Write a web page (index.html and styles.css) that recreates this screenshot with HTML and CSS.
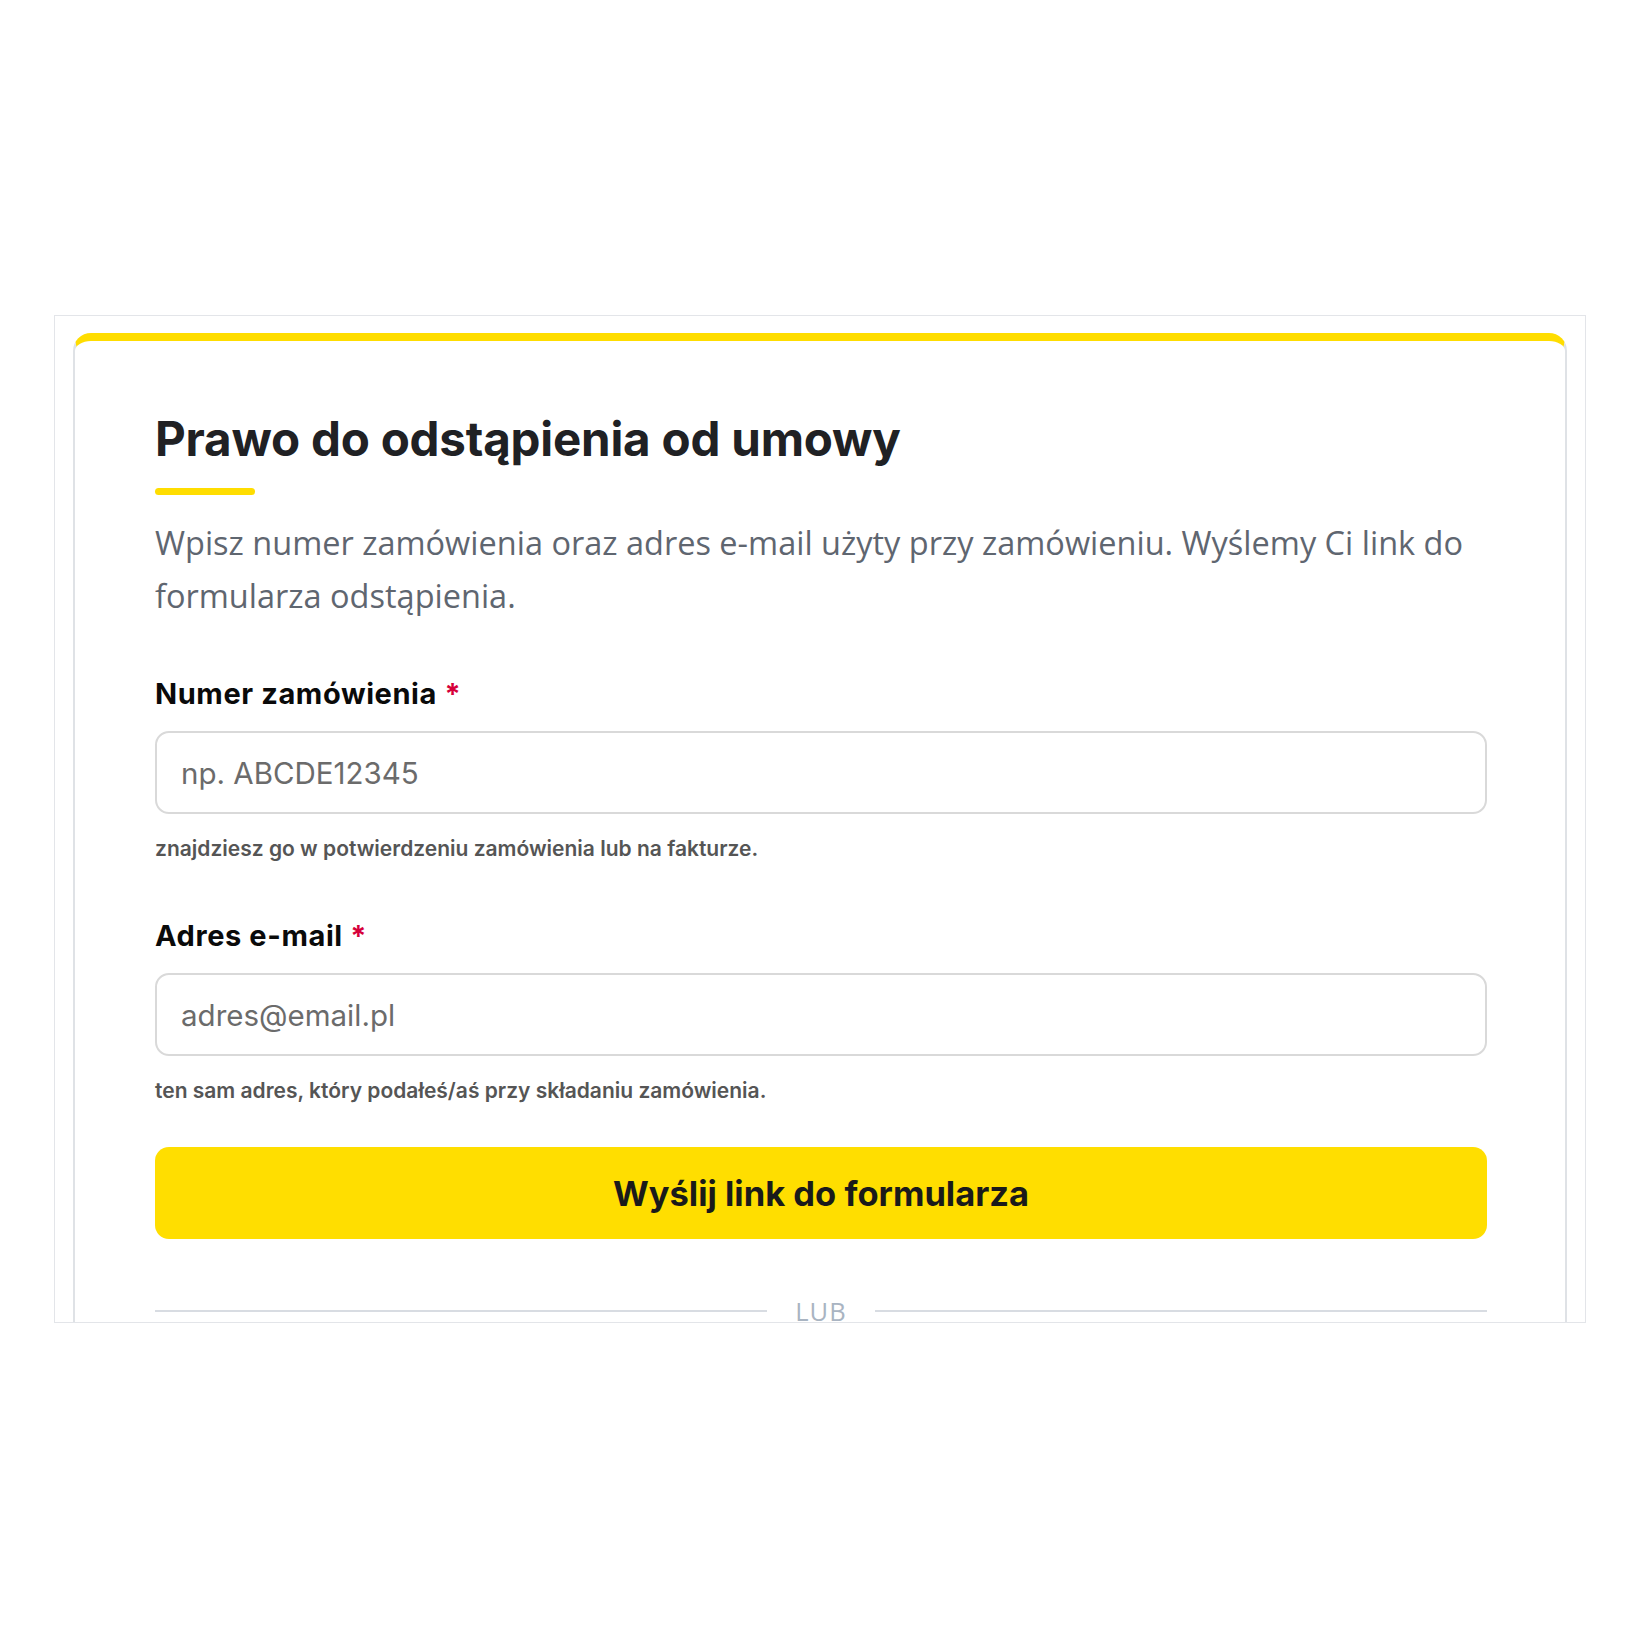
FILE: index.html
```html
<!DOCTYPE html>
<html lang="pl">
<head>
    <meta charset="UTF-8">
    <meta name="viewport" content="width=device-width, initial-scale=1.0">
    <title>Prawo do odstąpienia od umowy</title>
    <link rel="stylesheet" href="styles.css">
</head>
<body>
    <div class="frame">
        <section class="withdraw">
            <h1 class="withdraw__title">Prawo do odstąpienia od umowy</h1>
            <span class="withdraw__line"></span>
            <p class="withdraw__text">Wpisz numer zamówienia oraz adres e-mail użyty przy zamówieniu. Wyślemy Ci link do formularza odstąpienia.</p>

            <form class="form" onsubmit="return false">
                <div class="form__field">
                    <label class="form__label" for="order">Numer zamówienia <span class="form__req">*</span></label>
                    <input class="form__input" id="order" type="text" placeholder="np. ABCDE12345">
                    <p class="form__hint">znajdziesz go w potwierdzeniu zamówienia lub na fakturze.</p>
                </div>
                <div class="form__field">
                    <label class="form__label" for="email">Adres e-mail <span class="form__req">*</span></label>
                    <input class="form__input" id="email" type="email" placeholder="adres@email.pl">
                    <p class="form__hint">ten sam adres, który podałeś/aś przy składaniu zamówienia.</p>
                </div>
                <button class="form__button" type="submit">Wyślij link do formularza</button>
            </form>

            <div class="divider"><span class="divider__text">LUB</span></div>
        </section>
    </div>
</body>
</html>
```

FILE: styles.css
```css
body {
    font-family: 'Inter', sans-serif;
    color: #000000;
    background-color: #ffffff;
    margin: 0;
}

.frame {
    box-sizing: border-box;
    margin: 315px 54px 0 54px;
    height: 1008px;
    border: 1px solid #e3e5e9;
    padding: 17px 18px 0 18px;
    overflow: hidden;
}

.withdraw {
    border: 2px solid #dfe2e6;
    border-top: 8px solid #ffdd00;
    border-radius: 18px;
    padding: 70px 78px 80px 80px;
}

.withdraw__title {
    margin: 0;
    font-size: 47.5px;
    font-weight: 700;
    line-height: 56px;
    letter-spacing: -0.2px;
    color: #202124;
}

.withdraw__line {
    display: block;
    width: 100px;
    height: 7px;
    margin-top: 21px;
    border-radius: 4px;
    background-color: #ffdd00;
}

.withdraw__text {
    margin: 21px 0 0 0;
    font-family: 'Open Sans', sans-serif;
    font-size: 32.5px;
    line-height: 53px;
    color: #5f6670;
}

.form {
    margin-top: 54px;
}

.form__field {
    margin-bottom: 42px;
}

.form__field + .form__field {
    margin-top: 55px;
}

.form__label {
    display: block;
    font-size: 29px;
    font-weight: 700;
    line-height: 36px;
    letter-spacing: 0.6px;
    color: #0a0a0a;
}

.form__req {
    color: #d6003a;
}

.form__input {
    display: block;
    box-sizing: border-box;
    width: 100%;
    height: 83px;
    margin-top: 19px;
    padding: 0 24px;
    border: 2px solid #d9d9d9;
    border-radius: 14px;
    font-family: inherit;
    font-size: 29.5px;
    color: #222222;
    outline: none;
}

.form__input::placeholder {
    color: #6b6b6b;
}

.form__hint {
    margin: 21px 0 0 0;
    font-size: 21px;
    font-weight: 600;
    line-height: 28px;
    color: #555555;
}

.form__button {
    display: block;
    width: 100%;
    height: 92px;
    border: none;
    border-radius: 14px;
    background-color: #ffde00;
    font-family: inherit;
    font-size: 34.5px;
    font-weight: 700;
    color: #1a1a1a;
    cursor: pointer;
}

.divider {
    display: flex;
    align-items: center;
    gap: 28px;
    height: 36px;
    margin-top: 54px;
}

.divider::before,
.divider::after {
    content: "";
    flex: 1;
    height: 2px;
    background-color: #d8dce2;
}

.divider__text {
    font-family: 'Open Sans', sans-serif;
    font-size: 25.5px;
    letter-spacing: 1px;
    color: #a9b4c2;
}
```
